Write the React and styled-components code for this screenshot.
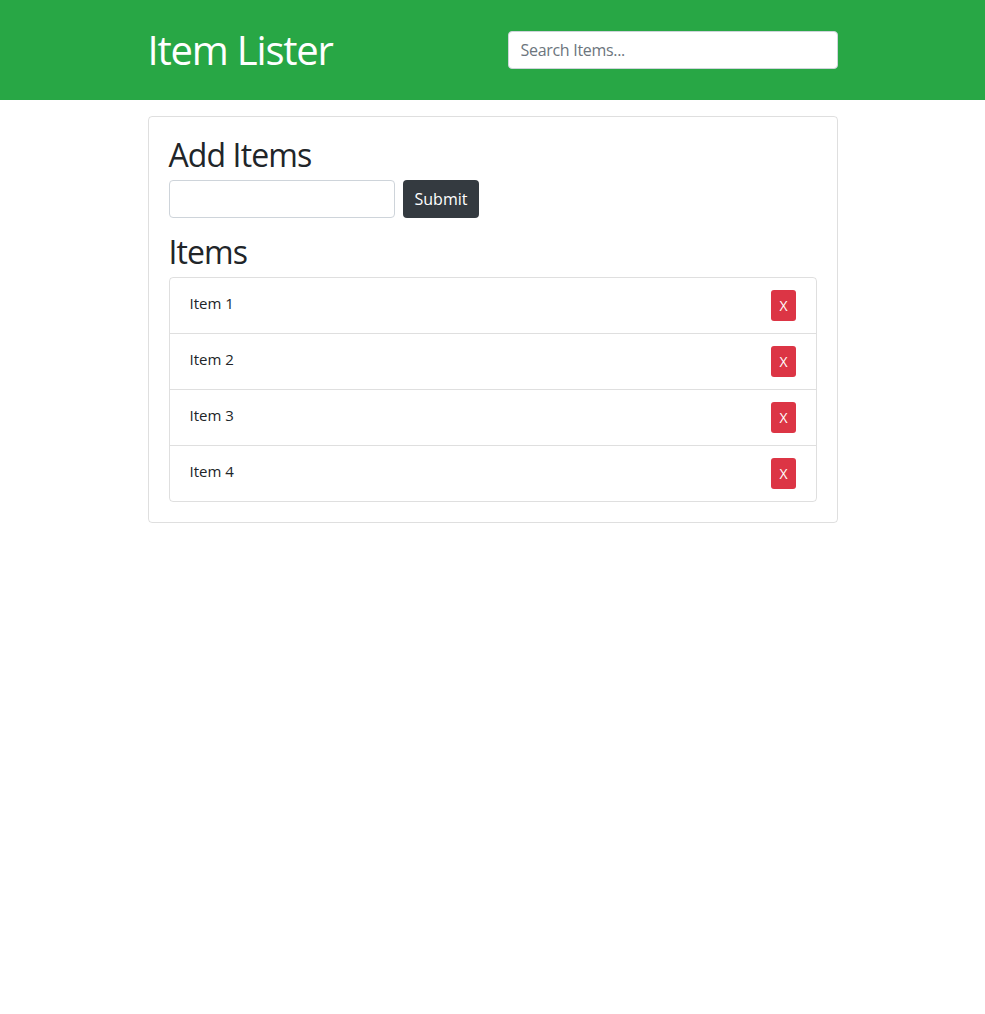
import styled, { createGlobalStyle } from "styled-components";

const GlobalStyle = createGlobalStyle`
  body {
    margin: 0;
    font-family: "Open Sans", "Noto Sans", sans-serif;
    font-size: 16px;
    line-height: 1.5;
    color: #212529;
    background: #fff;
  }
  * { box-sizing: border-box; }
`;

const Header = styled.header`
  background: #28a745;
  color: #fff;
  height: 100px;
  display: flex;
  align-items: center;
`;

const Container = styled.div`
  width: 690px;
  margin: 0 auto;
`;

const HeaderRow = styled.div`
  display: grid;
  grid-template-columns: 1fr 1fr;
  column-gap: 30px;
  align-items: center;
`;

const Title = styled.h1`
  margin: 0;
  font-size: 40px;
  font-weight: 400;
  line-height: 48px;
  letter-spacing: -1.2px;
`;

const Input = styled.input`
  display: block;
  width: ${(p) => p.$width || "100%"};
  height: 38px;
  padding: 6px 12px;
  font-family: inherit;
  font-size: 16px;
  color: #495057;
  background: #fff;
  border: 1px solid #ced4da;
  border-radius: 4px;
  outline: none;
  &::placeholder {
    color: #6c757d;
    letter-spacing: -0.3px;
  }
`;

const Main = styled.main`
  padding-top: 16px;
`;

const Card = styled.div`
  border: 1px solid rgba(0, 0, 0, 0.125);
  border-radius: 4px;
  padding: 20px;
`;

const Heading = styled.h2`
  margin: 0 0 8px;
  font-size: 32px;
  font-weight: 400;
  line-height: 35px;
  letter-spacing: -0.9px;
`;

const Form = styled.form`
  display: flex;
  gap: 8px;
  margin-bottom: 16px;
`;

const Button = styled.button`
  font-family: inherit;
  color: #fff;
  border: 1px solid transparent;
  border-radius: ${(p) => (p.$small ? "3px" : "4px")};
  font-size: ${(p) => (p.$small ? "14px" : "16px")};
  line-height: ${(p) => (p.$small ? "21px" : "24px")};
  padding: ${(p) => (p.$small ? "4px 7px" : "6px 11px")};
  background: ${(p) => p.$bg};
  cursor: pointer;
`;

const List = styled.ul`
  list-style: none;
  margin: 0;
  padding: 0;
  border: 1px solid rgba(0, 0, 0, 0.125);
  border-radius: 4px;
`;

const Item = styled.li`
  display: flex;
  justify-content: space-between;
  align-items: flex-start;
  padding: 12px 20px;
  height: ${(p) => (p.$first ? "55px" : "56px")};
  border-top: ${(p) => (p.$first ? "none" : "1px solid rgba(0, 0, 0, 0.125)")};
  font-size: 15px;
  line-height: 26px;
`;

const items = ["Item 1", "Item 2", "Item 3", "Item 4"];

export default function App() {
  return (
    <>
      <GlobalStyle />
      <Header>
        <Container>
          <HeaderRow>
            <Title>Item Lister</Title>
            <Input type="text" placeholder="Search Items..." />
          </HeaderRow>
        </Container>
      </Header>
      <Main>
        <Container>
          <Card>
            <Heading>Add Items</Heading>
            <Form onSubmit={(e) => e.preventDefault()}>
              <Input type="text" $width="226px" />
              <Button type="submit" $bg="#343a40">
                Submit
              </Button>
            </Form>
            <Heading>Items</Heading>
            <List>
              {items.map((name, i) => (
                <Item key={name} $first={i === 0}>
                  {name}
                  <Button $small $bg="#dc3545">
                    X
                  </Button>
                </Item>
              ))}
            </List>
          </Card>
        </Container>
      </Main>
    </>
  );
}
